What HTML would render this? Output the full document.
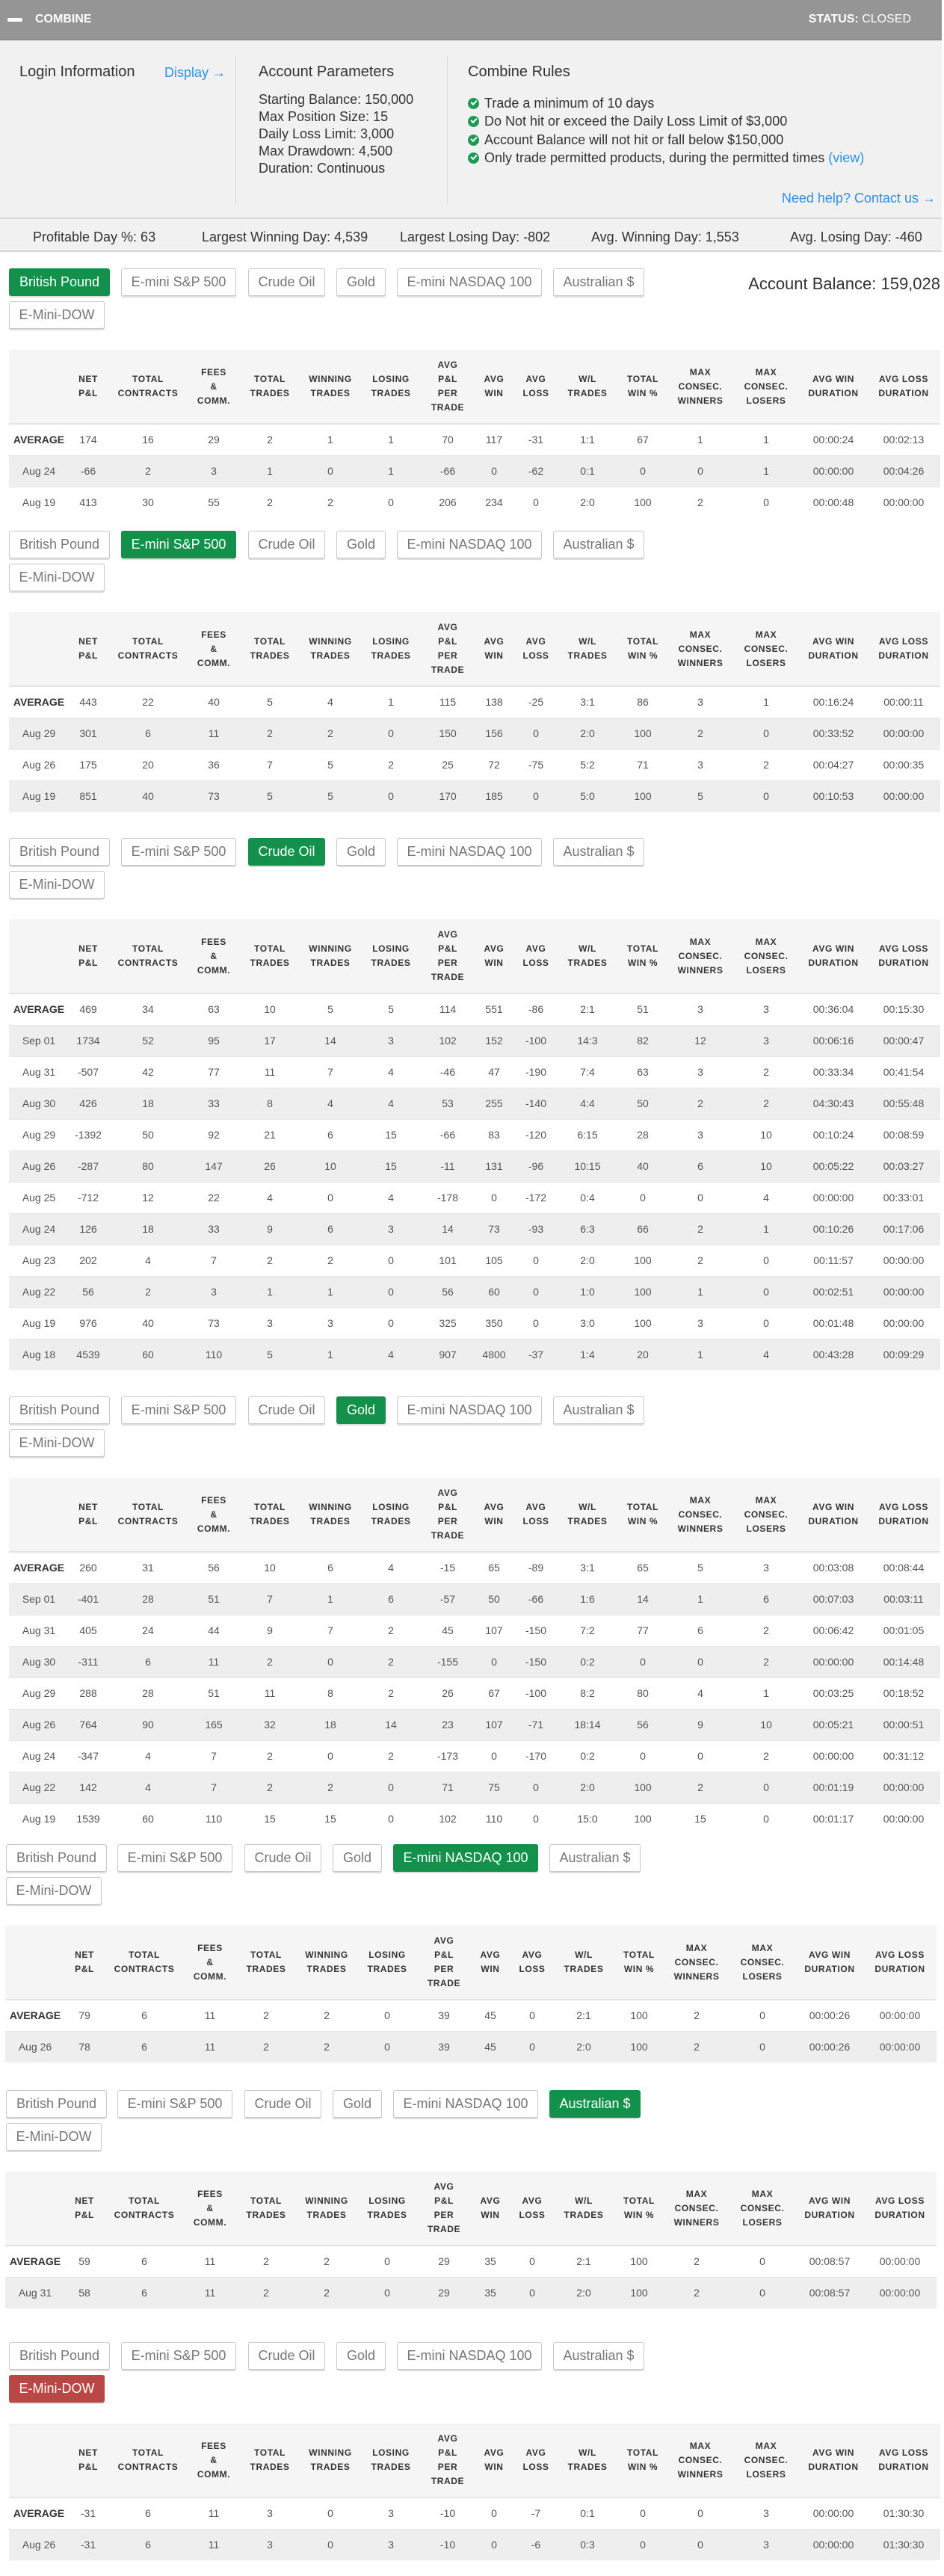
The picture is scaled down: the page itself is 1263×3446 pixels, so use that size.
<!DOCTYPE html>
<html><head><meta charset="utf-8"><style>
*{box-sizing:border-box;margin:0;padding:0}
body{width:1263px;height:3446px;position:relative;background:#fff;font-family:"Liberation Sans",Arial,sans-serif;color:#333;overflow:hidden}
.abs{position:absolute;white-space:nowrap}
.hdr{left:0;top:0;width:1260px;height:54px;background:#959595;border-bottom:1px solid #7d7d7d}
.info{left:0;top:54px;width:1260px;height:239px;background:#f1f1f1;border-bottom:2px solid #d6d6d6}
.stats{left:0;top:293px;width:1260px;height:44px;background:#f1f1f1;border-bottom:2px solid #d6d6d6}
.vd{position:absolute;width:1px;background:#dcdcdc;top:74px;height:200px}
.h2{font-size:20px;color:#333}
.p{font-size:18px;line-height:23px;color:#333}
a,.lnk{color:#2e90e8;text-decoration:none}
.chk{display:inline-block;width:15px;height:15px;border-radius:50%;background:#1f9a55;position:relative;vertical-align:-2px;margin-right:7px}
.chk:after{content:"";position:absolute;left:4px;top:3px;width:6px;height:3px;border-left:2px solid #fff;border-bottom:2px solid #fff;transform:rotate(-45deg)}
.sec{position:absolute;left:0;width:1263px}
.btns{position:relative;height:88px}
.b{position:absolute;height:37px;border:1px solid #c8c8c8;border-radius:3px;background:#fff;color:#777;font-size:18px;line-height:35px;text-align:center;box-shadow:0 2px 0 #ddd}
.b.on{background:#13904a;border-color:#13904a;color:#fff}
.b.red{background:#b94745;border-color:#b94745;color:#fff}
table{position:absolute;left:12px;top:109px;width:1246px;border-collapse:collapse;table-layout:fixed}
th{background:#f5f5f5;height:99px;font-size:12px;font-weight:bold;letter-spacing:.6px;line-height:19px;text-align:center;vertical-align:middle;color:#333;border-bottom:2px solid #e4e4e4;padding:0}
td{height:42px;text-align:center;font-size:14px;color:#555;border-top:1px solid #e6e6e6;padding:0}
td:first-child{color:#555}
tr.avg td:first-child{font-weight:bold;color:#333;font-size:14px}
tbody tr:nth-child(even) td{background:#eeeeee}
</style></head><body>
<div class="abs hdr"></div>
<div class="abs" style="left:10px;top:24px;width:20px;height:5px;background:#fff;border-radius:2px"></div>
<div class="abs" style="left:47px;top:17px;font-size:16px;font-weight:bold;color:#fff">COMBINE</div>
<div class="abs" style="right:44px;top:17px;font-size:16px;color:#fff"><b>STATUS:</b> CLOSED</div>

<div class="abs info"></div>
<div class="vd" style="left:315px"></div>
<div class="vd" style="left:598px"></div>
<div class="abs h2" style="left:26px;top:85px">Login Information</div>
<div class="abs lnk" style="left:220px;top:87px;font-size:18px">Display →</div>
<div class="abs h2" style="left:346px;top:85px">Account Parameters</div>
<div class="abs p" style="left:346px;top:122px">Starting Balance: 150,000<br>Max Position Size: 15<br>Daily Loss Limit: 3,000<br>Max Drawdown: 4,500<br>Duration: Continuous</div>
<div class="abs h2" style="left:626px;top:85px">Combine Rules</div>
<div class="abs p" style="left:626px;top:126px;line-height:24.3px"><span class="chk"></span>Trade a minimum of 10 days<br><span class="chk"></span>Do Not hit or exceed the Daily Loss Limit of $3,000<br><span class="chk"></span>Account Balance will not hit or fall below $150,000<br><span class="chk"></span>Only trade permitted products, during the permitted times <span class="lnk">(view)</span></div>
<div class="abs lnk" style="right:11px;top:255px;font-size:18px">Need help? Contact us →</div>

<div class="abs stats"></div>
<div class="abs p" style="left:44px;top:306px">Profitable Day %: 63</div>
<div class="abs p" style="left:270px;top:306px">Largest Winning Day: 4,539</div>
<div class="abs p" style="left:535px;top:306px">Largest Losing Day: -802</div>
<div class="abs p" style="left:791px;top:306px">Avg. Winning Day: 1,553</div>
<div class="abs p" style="left:1057px;top:306px">Avg. Losing Day: -460</div>
<div class="abs" style="right:5px;top:367px;font-size:22px;color:#333">Account Balance: 159,028</div>

<!-- SECTION 1 -->
<div class="sec" style="top:359px">
<div class="b on" style="left:12px;top:0;width:135px">British Pound</div><div class="b" style="left:162px;top:0;width:154px">E-mini S&amp;P 500</div><div class="b" style="left:332px;top:0;width:103px">Crude Oil</div><div class="b" style="left:450px;top:0;width:66px">Gold</div><div class="b" style="left:531px;top:0;width:194px">E-mini NASDAQ 100</div><div class="b" style="left:740px;top:0;width:122px">Australian $</div><div class="b" style="left:12px;top:44px;width:128px">E-Mini-DOW</div>
<table><colgroup><col style="width:80px"><col style="width:52px"><col style="width:108px"><col style="width:68px"><col style="width:82px"><col style="width:80px"><col style="width:82px"><col style="width:70px"><col style="width:54px"><col style="width:58px"><col style="width:80px"><col style="width:68px"><col style="width:86px"><col style="width:90px"><col style="width:90px"><col style="width:98px"></colgroup>
<thead><tr><th></th><th>NET<br>P&amp;L</th><th>TOTAL<br>CONTRACTS</th><th>FEES<br>&amp;<br>COMM.</th><th>TOTAL<br>TRADES</th><th>WINNING<br>TRADES</th><th>LOSING<br>TRADES</th><th>AVG<br>P&amp;L<br>PER<br>TRADE</th><th>AVG<br>WIN</th><th>AVG<br>LOSS</th><th>W/L<br>TRADES</th><th>TOTAL<br>WIN %</th><th>MAX<br>CONSEC.<br>WINNERS</th><th>MAX<br>CONSEC.<br>LOSERS</th><th>AVG WIN<br>DURATION</th><th>AVG LOSS<br>DURATION</th></tr></thead>
<tbody>
<tr class="avg"><td>AVERAGE</td><td>174</td><td>16</td><td>29</td><td>2</td><td>1</td><td>1</td><td>70</td><td>117</td><td>-31</td><td>1:1</td><td>67</td><td>1</td><td>1</td><td>00:00:24</td><td>00:02:13</td></tr>
<tr><td>Aug 24</td><td>-66</td><td>2</td><td>3</td><td>1</td><td>0</td><td>1</td><td>-66</td><td>0</td><td>-62</td><td>0:1</td><td>0</td><td>0</td><td>1</td><td>00:00:00</td><td>00:04:26</td></tr>
<tr><td>Aug 19</td><td>413</td><td>30</td><td>55</td><td>2</td><td>2</td><td>0</td><td>206</td><td>234</td><td>0</td><td>2:0</td><td>100</td><td>2</td><td>0</td><td>00:00:48</td><td>00:00:00</td></tr>
</tbody></table></div>

<!-- SECTION 2 -->
<div class="sec" style="top:710px">
<div class="b" style="left:12px;top:0;width:135px">British Pound</div><div class="b on" style="left:162px;top:0;width:154px">E-mini S&amp;P 500</div><div class="b" style="left:332px;top:0;width:103px">Crude Oil</div><div class="b" style="left:450px;top:0;width:66px">Gold</div><div class="b" style="left:531px;top:0;width:194px">E-mini NASDAQ 100</div><div class="b" style="left:740px;top:0;width:122px">Australian $</div><div class="b" style="left:12px;top:44px;width:128px">E-Mini-DOW</div>
<table><colgroup><col style="width:80px"><col style="width:52px"><col style="width:108px"><col style="width:68px"><col style="width:82px"><col style="width:80px"><col style="width:82px"><col style="width:70px"><col style="width:54px"><col style="width:58px"><col style="width:80px"><col style="width:68px"><col style="width:86px"><col style="width:90px"><col style="width:90px"><col style="width:98px"></colgroup>
<thead><tr><th></th><th>NET<br>P&amp;L</th><th>TOTAL<br>CONTRACTS</th><th>FEES<br>&amp;<br>COMM.</th><th>TOTAL<br>TRADES</th><th>WINNING<br>TRADES</th><th>LOSING<br>TRADES</th><th>AVG<br>P&amp;L<br>PER<br>TRADE</th><th>AVG<br>WIN</th><th>AVG<br>LOSS</th><th>W/L<br>TRADES</th><th>TOTAL<br>WIN %</th><th>MAX<br>CONSEC.<br>WINNERS</th><th>MAX<br>CONSEC.<br>LOSERS</th><th>AVG WIN<br>DURATION</th><th>AVG LOSS<br>DURATION</th></tr></thead>
<tbody>
<tr class="avg"><td>AVERAGE</td><td>443</td><td>22</td><td>40</td><td>5</td><td>4</td><td>1</td><td>115</td><td>138</td><td>-25</td><td>3:1</td><td>86</td><td>3</td><td>1</td><td>00:16:24</td><td>00:00:11</td></tr>
<tr><td>Aug 29</td><td>301</td><td>6</td><td>11</td><td>2</td><td>2</td><td>0</td><td>150</td><td>156</td><td>0</td><td>2:0</td><td>100</td><td>2</td><td>0</td><td>00:33:52</td><td>00:00:00</td></tr>
<tr><td>Aug 26</td><td>175</td><td>20</td><td>36</td><td>7</td><td>5</td><td>2</td><td>25</td><td>72</td><td>-75</td><td>5:2</td><td>71</td><td>3</td><td>2</td><td>00:04:27</td><td>00:00:35</td></tr>
<tr><td>Aug 19</td><td>851</td><td>40</td><td>73</td><td>5</td><td>5</td><td>0</td><td>170</td><td>185</td><td>0</td><td>5:0</td><td>100</td><td>5</td><td>0</td><td>00:10:53</td><td>00:00:00</td></tr>
</tbody></table></div>

<!-- SECTION 3 -->
<div class="sec" style="top:1121px">
<div class="b" style="left:12px;top:0;width:135px">British Pound</div><div class="b" style="left:162px;top:0;width:154px">E-mini S&amp;P 500</div><div class="b on" style="left:332px;top:0;width:103px">Crude Oil</div><div class="b" style="left:450px;top:0;width:66px">Gold</div><div class="b" style="left:531px;top:0;width:194px">E-mini NASDAQ 100</div><div class="b" style="left:740px;top:0;width:122px">Australian $</div><div class="b" style="left:12px;top:44px;width:128px">E-Mini-DOW</div>
<table><colgroup><col style="width:80px"><col style="width:52px"><col style="width:108px"><col style="width:68px"><col style="width:82px"><col style="width:80px"><col style="width:82px"><col style="width:70px"><col style="width:54px"><col style="width:58px"><col style="width:80px"><col style="width:68px"><col style="width:86px"><col style="width:90px"><col style="width:90px"><col style="width:98px"></colgroup>
<thead><tr><th></th><th>NET<br>P&amp;L</th><th>TOTAL<br>CONTRACTS</th><th>FEES<br>&amp;<br>COMM.</th><th>TOTAL<br>TRADES</th><th>WINNING<br>TRADES</th><th>LOSING<br>TRADES</th><th>AVG<br>P&amp;L<br>PER<br>TRADE</th><th>AVG<br>WIN</th><th>AVG<br>LOSS</th><th>W/L<br>TRADES</th><th>TOTAL<br>WIN %</th><th>MAX<br>CONSEC.<br>WINNERS</th><th>MAX<br>CONSEC.<br>LOSERS</th><th>AVG WIN<br>DURATION</th><th>AVG LOSS<br>DURATION</th></tr></thead>
<tbody>
<tr class="avg"><td>AVERAGE</td><td>469</td><td>34</td><td>63</td><td>10</td><td>5</td><td>5</td><td>114</td><td>551</td><td>-86</td><td>2:1</td><td>51</td><td>3</td><td>3</td><td>00:36:04</td><td>00:15:30</td></tr>
<tr><td>Sep 01</td><td>1734</td><td>52</td><td>95</td><td>17</td><td>14</td><td>3</td><td>102</td><td>152</td><td>-100</td><td>14:3</td><td>82</td><td>12</td><td>3</td><td>00:06:16</td><td>00:00:47</td></tr>
<tr><td>Aug 31</td><td>-507</td><td>42</td><td>77</td><td>11</td><td>7</td><td>4</td><td>-46</td><td>47</td><td>-190</td><td>7:4</td><td>63</td><td>3</td><td>2</td><td>00:33:34</td><td>00:41:54</td></tr>
<tr><td>Aug 30</td><td>426</td><td>18</td><td>33</td><td>8</td><td>4</td><td>4</td><td>53</td><td>255</td><td>-140</td><td>4:4</td><td>50</td><td>2</td><td>2</td><td>04:30:43</td><td>00:55:48</td></tr>
<tr><td>Aug 29</td><td>-1392</td><td>50</td><td>92</td><td>21</td><td>6</td><td>15</td><td>-66</td><td>83</td><td>-120</td><td>6:15</td><td>28</td><td>3</td><td>10</td><td>00:10:24</td><td>00:08:59</td></tr>
<tr><td>Aug 26</td><td>-287</td><td>80</td><td>147</td><td>26</td><td>10</td><td>15</td><td>-11</td><td>131</td><td>-96</td><td>10:15</td><td>40</td><td>6</td><td>10</td><td>00:05:22</td><td>00:03:27</td></tr>
<tr><td>Aug 25</td><td>-712</td><td>12</td><td>22</td><td>4</td><td>0</td><td>4</td><td>-178</td><td>0</td><td>-172</td><td>0:4</td><td>0</td><td>0</td><td>4</td><td>00:00:00</td><td>00:33:01</td></tr>
<tr><td>Aug 24</td><td>126</td><td>18</td><td>33</td><td>9</td><td>6</td><td>3</td><td>14</td><td>73</td><td>-93</td><td>6:3</td><td>66</td><td>2</td><td>1</td><td>00:10:26</td><td>00:17:06</td></tr>
<tr><td>Aug 23</td><td>202</td><td>4</td><td>7</td><td>2</td><td>2</td><td>0</td><td>101</td><td>105</td><td>0</td><td>2:0</td><td>100</td><td>2</td><td>0</td><td>00:11:57</td><td>00:00:00</td></tr>
<tr><td>Aug 22</td><td>56</td><td>2</td><td>3</td><td>1</td><td>1</td><td>0</td><td>56</td><td>60</td><td>0</td><td>1:0</td><td>100</td><td>1</td><td>0</td><td>00:02:51</td><td>00:00:00</td></tr>
<tr><td>Aug 19</td><td>976</td><td>40</td><td>73</td><td>3</td><td>3</td><td>0</td><td>325</td><td>350</td><td>0</td><td>3:0</td><td>100</td><td>3</td><td>0</td><td>00:01:48</td><td>00:00:00</td></tr>
<tr><td>Aug 18</td><td>4539</td><td>60</td><td>110</td><td>5</td><td>1</td><td>4</td><td>907</td><td>4800</td><td>-37</td><td>1:4</td><td>20</td><td>1</td><td>4</td><td>00:43:28</td><td>00:09:29</td></tr>
</tbody></table></div>

<!-- SECTION 4 -->
<div class="sec" style="top:1868px">
<div class="b" style="left:12px;top:0;width:135px">British Pound</div><div class="b" style="left:162px;top:0;width:154px">E-mini S&amp;P 500</div><div class="b" style="left:332px;top:0;width:103px">Crude Oil</div><div class="b on" style="left:450px;top:0;width:66px">Gold</div><div class="b" style="left:531px;top:0;width:194px">E-mini NASDAQ 100</div><div class="b" style="left:740px;top:0;width:122px">Australian $</div><div class="b" style="left:12px;top:44px;width:128px">E-Mini-DOW</div>
<table><colgroup><col style="width:80px"><col style="width:52px"><col style="width:108px"><col style="width:68px"><col style="width:82px"><col style="width:80px"><col style="width:82px"><col style="width:70px"><col style="width:54px"><col style="width:58px"><col style="width:80px"><col style="width:68px"><col style="width:86px"><col style="width:90px"><col style="width:90px"><col style="width:98px"></colgroup>
<thead><tr><th></th><th>NET<br>P&amp;L</th><th>TOTAL<br>CONTRACTS</th><th>FEES<br>&amp;<br>COMM.</th><th>TOTAL<br>TRADES</th><th>WINNING<br>TRADES</th><th>LOSING<br>TRADES</th><th>AVG<br>P&amp;L<br>PER<br>TRADE</th><th>AVG<br>WIN</th><th>AVG<br>LOSS</th><th>W/L<br>TRADES</th><th>TOTAL<br>WIN %</th><th>MAX<br>CONSEC.<br>WINNERS</th><th>MAX<br>CONSEC.<br>LOSERS</th><th>AVG WIN<br>DURATION</th><th>AVG LOSS<br>DURATION</th></tr></thead>
<tbody>
<tr class="avg"><td>AVERAGE</td><td>260</td><td>31</td><td>56</td><td>10</td><td>6</td><td>4</td><td>-15</td><td>65</td><td>-89</td><td>3:1</td><td>65</td><td>5</td><td>3</td><td>00:03:08</td><td>00:08:44</td></tr>
<tr><td>Sep 01</td><td>-401</td><td>28</td><td>51</td><td>7</td><td>1</td><td>6</td><td>-57</td><td>50</td><td>-66</td><td>1:6</td><td>14</td><td>1</td><td>6</td><td>00:07:03</td><td>00:03:11</td></tr>
<tr><td>Aug 31</td><td>405</td><td>24</td><td>44</td><td>9</td><td>7</td><td>2</td><td>45</td><td>107</td><td>-150</td><td>7:2</td><td>77</td><td>6</td><td>2</td><td>00:06:42</td><td>00:01:05</td></tr>
<tr><td>Aug 30</td><td>-311</td><td>6</td><td>11</td><td>2</td><td>0</td><td>2</td><td>-155</td><td>0</td><td>-150</td><td>0:2</td><td>0</td><td>0</td><td>2</td><td>00:00:00</td><td>00:14:48</td></tr>
<tr><td>Aug 29</td><td>288</td><td>28</td><td>51</td><td>11</td><td>8</td><td>2</td><td>26</td><td>67</td><td>-100</td><td>8:2</td><td>80</td><td>4</td><td>1</td><td>00:03:25</td><td>00:18:52</td></tr>
<tr><td>Aug 26</td><td>764</td><td>90</td><td>165</td><td>32</td><td>18</td><td>14</td><td>23</td><td>107</td><td>-71</td><td>18:14</td><td>56</td><td>9</td><td>10</td><td>00:05:21</td><td>00:00:51</td></tr>
<tr><td>Aug 24</td><td>-347</td><td>4</td><td>7</td><td>2</td><td>0</td><td>2</td><td>-173</td><td>0</td><td>-170</td><td>0:2</td><td>0</td><td>0</td><td>2</td><td>00:00:00</td><td>00:31:12</td></tr>
<tr><td>Aug 22</td><td>142</td><td>4</td><td>7</td><td>2</td><td>2</td><td>0</td><td>71</td><td>75</td><td>0</td><td>2:0</td><td>100</td><td>2</td><td>0</td><td>00:01:19</td><td>00:00:00</td></tr>
<tr><td>Aug 19</td><td>1539</td><td>60</td><td>110</td><td>15</td><td>15</td><td>0</td><td>102</td><td>110</td><td>0</td><td>15:0</td><td>100</td><td>15</td><td>0</td><td>00:01:17</td><td>00:00:00</td></tr>
</tbody></table></div>

<!-- SECTION 5 -->
<div class="sec" style="top:2467px">
<div class="b" style="left:8px;top:0;width:135px">British Pound</div><div class="b" style="left:157px;top:0;width:154px">E-mini S&amp;P 500</div><div class="b" style="left:327px;top:0;width:103px">Crude Oil</div><div class="b" style="left:445px;top:0;width:66px">Gold</div><div class="b on" style="left:526px;top:0;width:194px">E-mini NASDAQ 100</div><div class="b" style="left:735px;top:0;width:122px">Australian $</div><div class="b" style="left:8px;top:44px;width:128px">E-Mini-DOW</div>
<table style="left:7px"><colgroup><col style="width:80px"><col style="width:52px"><col style="width:108px"><col style="width:68px"><col style="width:82px"><col style="width:80px"><col style="width:82px"><col style="width:70px"><col style="width:54px"><col style="width:58px"><col style="width:80px"><col style="width:68px"><col style="width:86px"><col style="width:90px"><col style="width:90px"><col style="width:98px"></colgroup>
<thead><tr><th></th><th>NET<br>P&amp;L</th><th>TOTAL<br>CONTRACTS</th><th>FEES<br>&amp;<br>COMM.</th><th>TOTAL<br>TRADES</th><th>WINNING<br>TRADES</th><th>LOSING<br>TRADES</th><th>AVG<br>P&amp;L<br>PER<br>TRADE</th><th>AVG<br>WIN</th><th>AVG<br>LOSS</th><th>W/L<br>TRADES</th><th>TOTAL<br>WIN %</th><th>MAX<br>CONSEC.<br>WINNERS</th><th>MAX<br>CONSEC.<br>LOSERS</th><th>AVG WIN<br>DURATION</th><th>AVG LOSS<br>DURATION</th></tr></thead>
<tbody>
<tr class="avg"><td>AVERAGE</td><td>79</td><td>6</td><td>11</td><td>2</td><td>2</td><td>0</td><td>39</td><td>45</td><td>0</td><td>2:1</td><td>100</td><td>2</td><td>0</td><td>00:00:26</td><td>00:00:00</td></tr>
<tr><td>Aug 26</td><td>78</td><td>6</td><td>11</td><td>2</td><td>2</td><td>0</td><td>39</td><td>45</td><td>0</td><td>2:0</td><td>100</td><td>2</td><td>0</td><td>00:00:26</td><td>00:00:00</td></tr>
</tbody></table></div>

<!-- SECTION 6 -->
<div class="sec" style="top:2796px">
<div class="b" style="left:8px;top:0;width:135px">British Pound</div><div class="b" style="left:157px;top:0;width:154px">E-mini S&amp;P 500</div><div class="b" style="left:327px;top:0;width:103px">Crude Oil</div><div class="b" style="left:445px;top:0;width:66px">Gold</div><div class="b" style="left:526px;top:0;width:194px">E-mini NASDAQ 100</div><div class="b on" style="left:735px;top:0;width:122px">Australian $</div><div class="b" style="left:8px;top:44px;width:128px">E-Mini-DOW</div>
<table style="left:7px"><colgroup><col style="width:80px"><col style="width:52px"><col style="width:108px"><col style="width:68px"><col style="width:82px"><col style="width:80px"><col style="width:82px"><col style="width:70px"><col style="width:54px"><col style="width:58px"><col style="width:80px"><col style="width:68px"><col style="width:86px"><col style="width:90px"><col style="width:90px"><col style="width:98px"></colgroup>
<thead><tr><th></th><th>NET<br>P&amp;L</th><th>TOTAL<br>CONTRACTS</th><th>FEES<br>&amp;<br>COMM.</th><th>TOTAL<br>TRADES</th><th>WINNING<br>TRADES</th><th>LOSING<br>TRADES</th><th>AVG<br>P&amp;L<br>PER<br>TRADE</th><th>AVG<br>WIN</th><th>AVG<br>LOSS</th><th>W/L<br>TRADES</th><th>TOTAL<br>WIN %</th><th>MAX<br>CONSEC.<br>WINNERS</th><th>MAX<br>CONSEC.<br>LOSERS</th><th>AVG WIN<br>DURATION</th><th>AVG LOSS<br>DURATION</th></tr></thead>
<tbody>
<tr class="avg"><td>AVERAGE</td><td>59</td><td>6</td><td>11</td><td>2</td><td>2</td><td>0</td><td>29</td><td>35</td><td>0</td><td>2:1</td><td>100</td><td>2</td><td>0</td><td>00:08:57</td><td>00:00:00</td></tr>
<tr><td>Aug 31</td><td>58</td><td>6</td><td>11</td><td>2</td><td>2</td><td>0</td><td>29</td><td>35</td><td>0</td><td>2:0</td><td>100</td><td>2</td><td>0</td><td>00:08:57</td><td>00:00:00</td></tr>
</tbody></table></div>

<!-- SECTION 7 -->
<div class="sec" style="top:3133px">
<div class="b" style="left:12px;top:0;width:135px">British Pound</div><div class="b" style="left:162px;top:0;width:154px">E-mini S&amp;P 500</div><div class="b" style="left:332px;top:0;width:103px">Crude Oil</div><div class="b" style="left:450px;top:0;width:66px">Gold</div><div class="b" style="left:531px;top:0;width:194px">E-mini NASDAQ 100</div><div class="b" style="left:740px;top:0;width:122px">Australian $</div><div class="b red" style="left:12px;top:44px;width:128px">E-Mini-DOW</div>
<table><colgroup><col style="width:80px"><col style="width:52px"><col style="width:108px"><col style="width:68px"><col style="width:82px"><col style="width:80px"><col style="width:82px"><col style="width:70px"><col style="width:54px"><col style="width:58px"><col style="width:80px"><col style="width:68px"><col style="width:86px"><col style="width:90px"><col style="width:90px"><col style="width:98px"></colgroup>
<thead><tr><th></th><th>NET<br>P&amp;L</th><th>TOTAL<br>CONTRACTS</th><th>FEES<br>&amp;<br>COMM.</th><th>TOTAL<br>TRADES</th><th>WINNING<br>TRADES</th><th>LOSING<br>TRADES</th><th>AVG<br>P&amp;L<br>PER<br>TRADE</th><th>AVG<br>WIN</th><th>AVG<br>LOSS</th><th>W/L<br>TRADES</th><th>TOTAL<br>WIN %</th><th>MAX<br>CONSEC.<br>WINNERS</th><th>MAX<br>CONSEC.<br>LOSERS</th><th>AVG WIN<br>DURATION</th><th>AVG LOSS<br>DURATION</th></tr></thead>
<tbody>
<tr class="avg"><td>AVERAGE</td><td>-31</td><td>6</td><td>11</td><td>3</td><td>0</td><td>3</td><td>-10</td><td>0</td><td>-7</td><td>0:1</td><td>0</td><td>0</td><td>3</td><td>00:00:00</td><td>01:30:30</td></tr>
<tr><td>Aug 26</td><td>-31</td><td>6</td><td>11</td><td>3</td><td>0</td><td>3</td><td>-10</td><td>0</td><td>-6</td><td>0:3</td><td>0</td><td>0</td><td>3</td><td>00:00:00</td><td>01:30:30</td></tr>
</tbody></table></div>
</body></html>
